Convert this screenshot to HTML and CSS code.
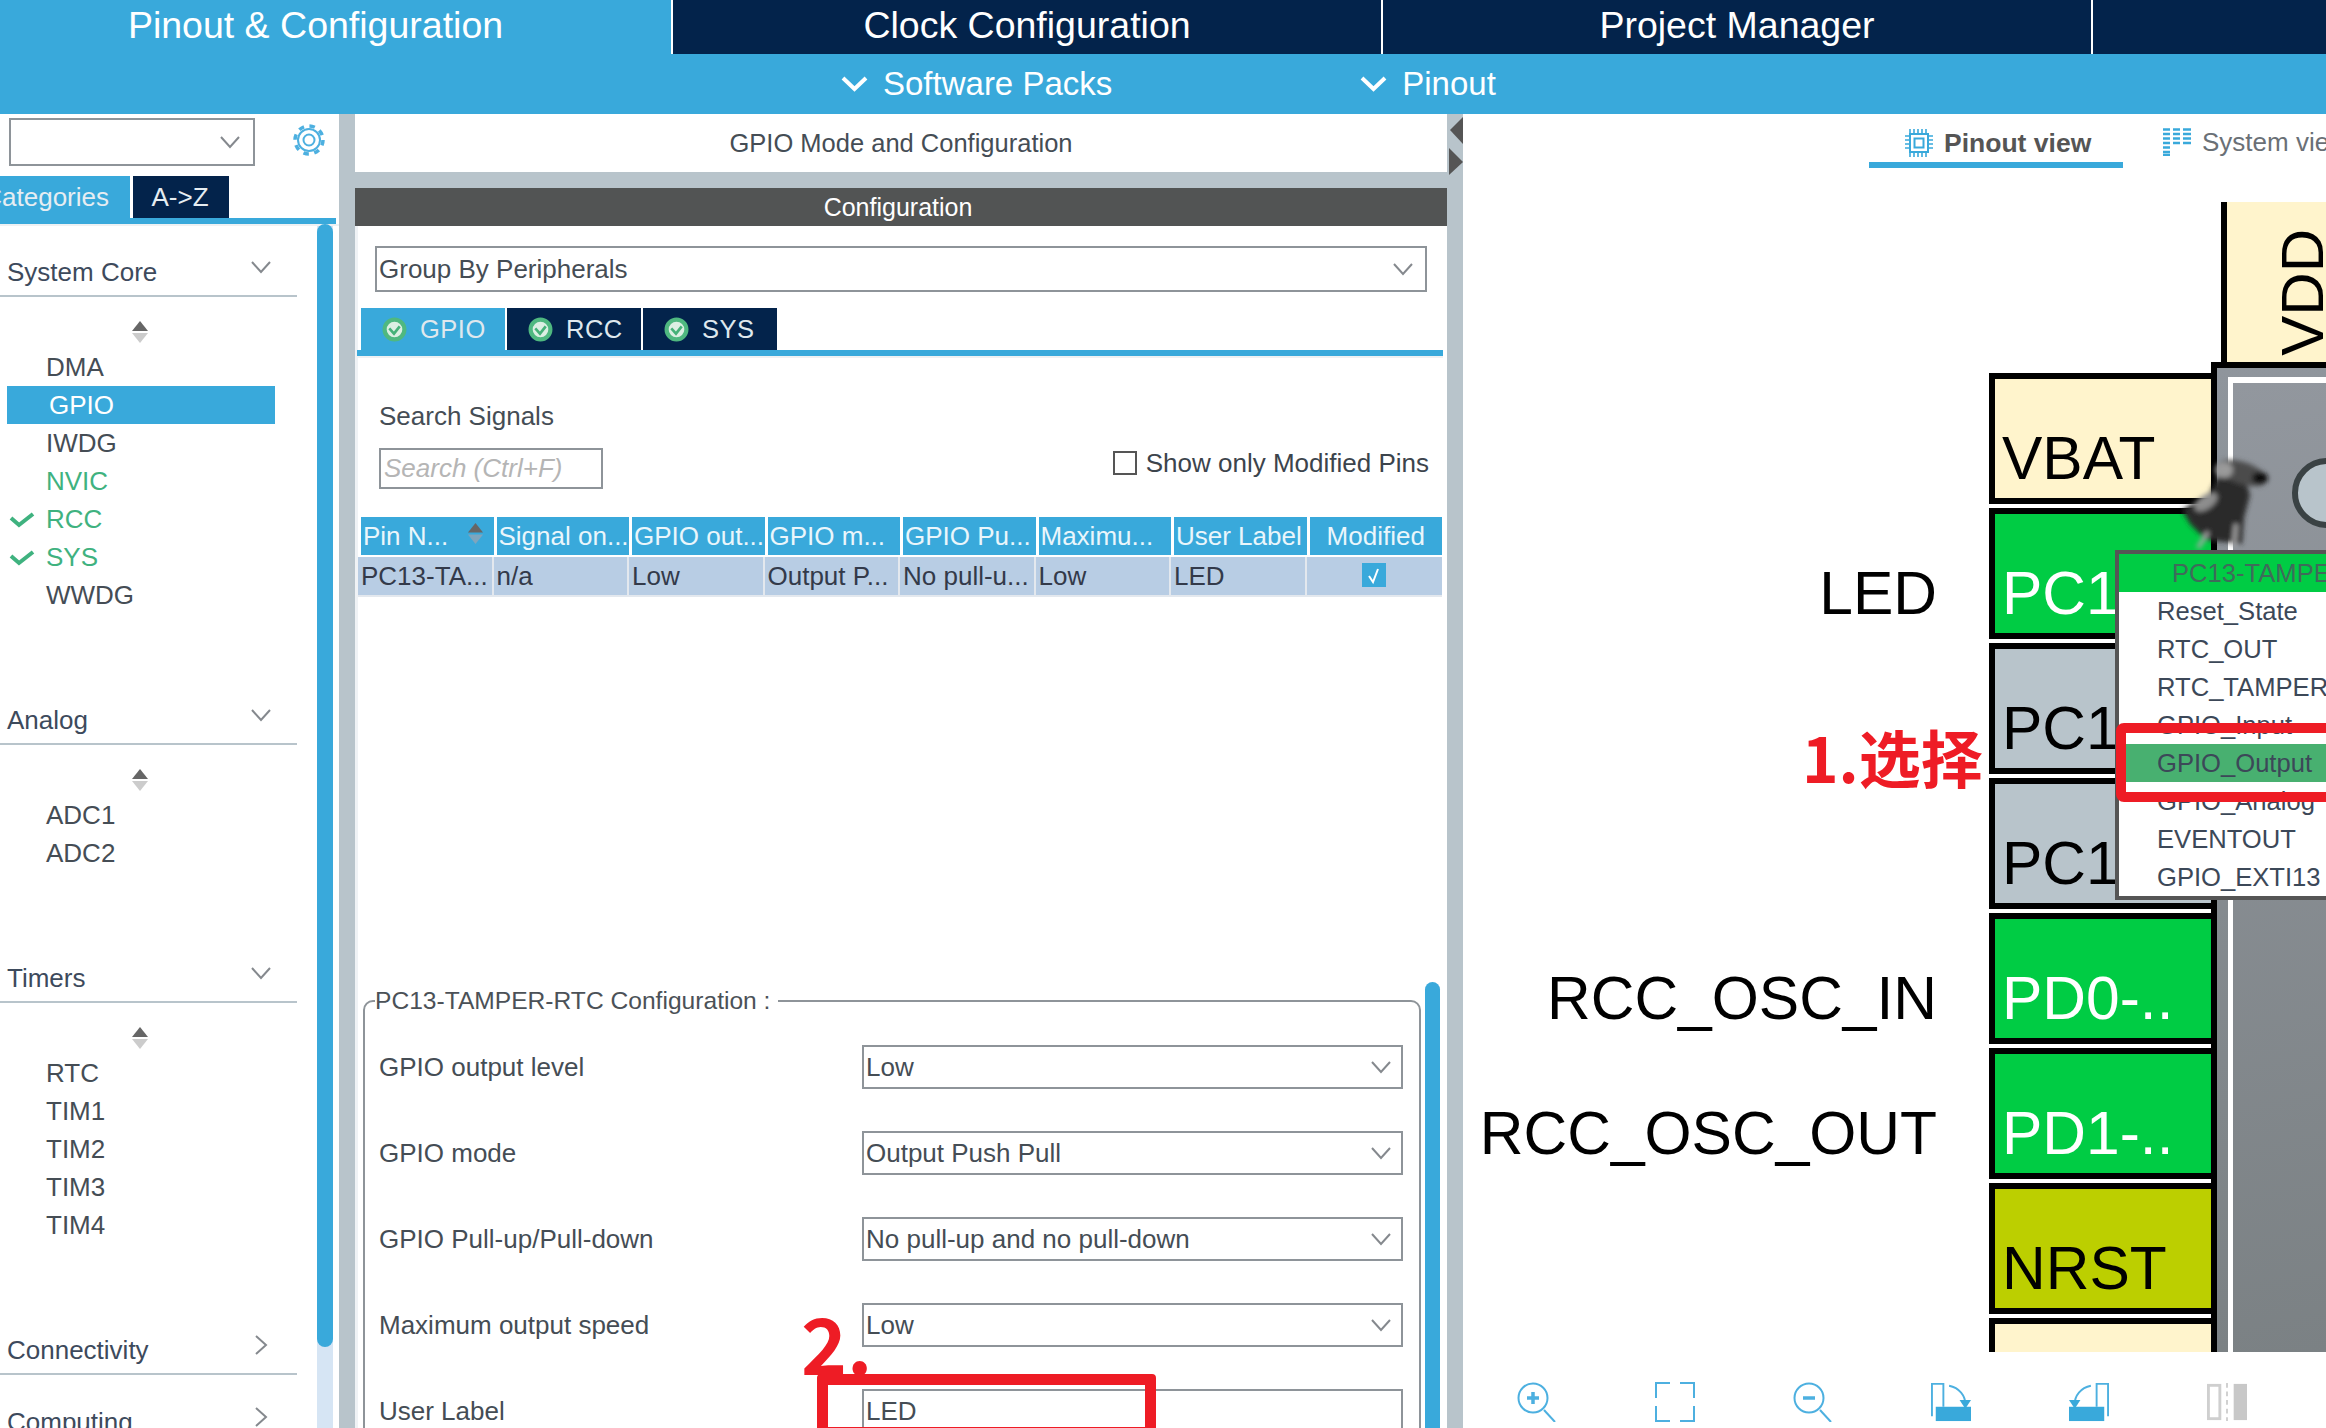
FILE: index.html
```html
<!DOCTYPE html>
<html lang="en">
<head>
  <meta charset="UTF-8" />
  <title>Pinout &amp; Configuration</title>
  <link rel="stylesheet" href="styles.css">
</head>
<body>
  <nav class="top-tabs">
    <div class="top-tab top-tab-active">Pinout &amp; Configuration</div>
    <div class="top-tab">Clock Configuration</div>
    <div class="top-tab">Project Manager</div>
    <div class="top-tab top-tab-rest"></div>
  </nav>
  <div class="sub-nav">
    <div class="sub-item">
      <svg class="sub-chevron" viewBox="0 0 29 18"><path d="M3 3 L14.5 14 L26 3" /></svg>
      <span>Software Packs</span>
    </div>
    <div class="sub-item">
      <svg class="sub-chevron" viewBox="0 0 29 18"><path d="M3 3 L14.5 14 L26 3" /></svg>
      <span>Pinout</span>
    </div>
  </div>

  <div class="workspace">
    <aside class="sidebar">
      <div class="side-search">
        <div class="side-select">
          <svg class="chevron" viewBox="0 0 22 14"><path d="M2 2 L11 12 L20 2" /></svg>
        </div>
        <svg class="gear" viewBox="0 0 32 32">
          <circle cx="16" cy="16" r="14" class="gear-teeth" />
          <circle cx="16" cy="16" r="11" class="gear-ring" />
          <circle cx="16" cy="16" r="5.5" class="gear-ring" />
        </svg>
      </div>
      <div class="side-tabs">
        <div class="side-tab side-tab-active"><span>Categories</span></div>
        <div class="side-tab">A-&gt;Z</div>
      </div>
      <div class="side-body">
        <div class="category-list">
          <section class="category">
            <div class="category-head">
              <span>System Core</span>
              <svg class="chevron" viewBox="0 0 22 14"><path d="M2 2 L11 12 L20 2" /></svg>
            </div>
            <svg class="sort-icon" viewBox="0 0 18 22"><path class="sort-up" d="M9 0 L17 10 H1 Z" /><path class="sort-down" d="M1 12 H17 L9 22 Z" /></svg>
            <div class="category-item">DMA</div>
            <div class="category-item category-item-selected">GPIO</div>
            <div class="category-item">IWDG</div>
            <div class="category-item category-item-green">NVIC</div>
            <div class="category-item category-item-green">
              <svg class="item-check" viewBox="0 0 26 18"><path d="M2 8 L10 15 L24 4" /></svg>RCC
            </div>
            <div class="category-item category-item-green">
              <svg class="item-check" viewBox="0 0 26 18"><path d="M2 8 L10 15 L24 4" /></svg>SYS
            </div>
            <div class="category-item">WWDG</div>
          </section>
          <section class="category">
            <div class="category-head">
              <span>Analog</span>
              <svg class="chevron" viewBox="0 0 22 14"><path d="M2 2 L11 12 L20 2" /></svg>
            </div>
            <svg class="sort-icon" viewBox="0 0 18 22"><path class="sort-up" d="M9 0 L17 10 H1 Z" /><path class="sort-down" d="M1 12 H17 L9 22 Z" /></svg>
            <div class="category-item">ADC1</div>
            <div class="category-item">ADC2</div>
          </section>
          <section class="category">
            <div class="category-head">
              <span>Timers</span>
              <svg class="chevron" viewBox="0 0 22 14"><path d="M2 2 L11 12 L20 2" /></svg>
            </div>
            <svg class="sort-icon" viewBox="0 0 18 22"><path class="sort-up" d="M9 0 L17 10 H1 Z" /><path class="sort-down" d="M1 12 H17 L9 22 Z" /></svg>
            <div class="category-item">RTC</div>
            <div class="category-item">TIM1</div>
            <div class="category-item">TIM2</div>
            <div class="category-item">TIM3</div>
            <div class="category-item">TIM4</div>
          </section>
          <section class="category category-closed">
            <div class="category-head">
              <span>Connectivity</span>
              <svg class="chevron-right" viewBox="0 0 14 22"><path d="M2 2 L12 11 L2 20" /></svg>
            </div>
          </section>
          <section class="category category-closed">
            <div class="category-head">
              <span>Computing</span>
              <svg class="chevron-right" viewBox="0 0 14 22"><path d="M2 2 L12 11 L2 20" /></svg>
            </div>
          </section>
        </div>
        <div class="side-track"><div class="side-thumb"></div></div>
      </div>
    </aside>

    <div class="divider"></div>

    <main class="config">
      <div class="config-title">GPIO Mode and Configuration</div>
      <div class="config-gap"></div>
      <div class="config-band">Configuration</div>

      <div class="config-body">
        <div class="group-select">
          <span>Group By Peripherals</span>
          <svg class="chevron" viewBox="0 0 22 14"><path d="M2 2 L11 12 L20 2" /></svg>
        </div>

        <div class="periph-tabs">
          <div class="periph-tab periph-tab-active">
            <svg class="ok-icon" viewBox="0 0 24 24"><circle cx="12" cy="12" r="9.5" /><path d="M7 11 L11.5 16 L17 9" /></svg>GPIO
          </div>
          <div class="periph-tab">
            <svg class="ok-icon" viewBox="0 0 24 24"><circle cx="12" cy="12" r="9.5" /><path d="M7 11 L11.5 16 L17 9" /></svg>RCC
          </div>
          <div class="periph-tab">
            <svg class="ok-icon" viewBox="0 0 24 24"><circle cx="12" cy="12" r="9.5" /><path d="M7 11 L11.5 16 L17 9" /></svg>SYS
          </div>
        </div>

        <div class="search-title">Search Signals</div>
        <div class="search-row">
          <div class="search-box">Search (Ctrl+F)</div>
          <label class="modified-check"><span class="check-box"></span>Show only Modified Pins</label>
        </div>

        <div class="signal-table">
          <div class="signal-head signal-head-sort">Pin N...
            <svg class="sort-icon-small" viewBox="0 0 18 22"><path class="sort-up" d="M9 0 L17 10 H1 Z" /><path class="sort-fade" d="M1 12 H17 L9 22 Z" /></svg>
          </div>
          <div class="signal-head">Signal on...</div>
          <div class="signal-head">GPIO out...</div>
          <div class="signal-head">GPIO m...</div>
          <div class="signal-head">GPIO Pu...</div>
          <div class="signal-head">Maximu...</div>
          <div class="signal-head">User Label</div>
          <div class="signal-head signal-center">Modified</div>

          <div class="signal-cell">PC13-TA...</div>
          <div class="signal-cell">n/a</div>
          <div class="signal-cell">Low</div>
          <div class="signal-cell">Output P...</div>
          <div class="signal-cell">No pull-u...</div>
          <div class="signal-cell">Low</div>
          <div class="signal-cell">LED</div>
          <div class="signal-cell signal-center">
            <svg class="table-check" viewBox="0 0 24 24"><rect width="24" height="24" /><path d="M7 13 L11 19 L16 6" /></svg>
          </div>
        </div>

        <fieldset class="pin-config">
          <legend>PC13-TAMPER-RTC Configuration :</legend>
          <div class="config-row">
            <span>GPIO output level</span>
            <div class="config-select">Low<svg class="chevron" viewBox="0 0 22 14"><path d="M2 2 L11 12 L20 2" /></svg></div>
          </div>
          <div class="config-row">
            <span>GPIO mode</span>
            <div class="config-select">Output Push Pull<svg class="chevron" viewBox="0 0 22 14"><path d="M2 2 L11 12 L20 2" /></svg></div>
          </div>
          <div class="config-row">
            <span>GPIO Pull-up/Pull-down</span>
            <div class="config-select">No pull-up and no pull-down<svg class="chevron" viewBox="0 0 22 14"><path d="M2 2 L11 12 L20 2" /></svg></div>
          </div>
          <div class="config-row">
            <span>Maximum output speed</span>
            <div class="config-select">Low<svg class="chevron" viewBox="0 0 22 14"><path d="M2 2 L11 12 L20 2" /></svg></div>
          </div>
          <div class="config-row">
            <span>User Label</span>
            <div class="config-select">LED</div>
          </div>
        </fieldset>
      </div>

      <div class="config-scroll"></div>
      <div class="note-two">2.</div>
      <div class="note-box-two"></div>
    </main>

    <div class="divider divider-arrows">
      <svg class="collapse-arrow" viewBox="0 0 14 27"><path d="M14 0 L1 13 L14 27 Z" /></svg>
      <svg class="collapse-arrow" viewBox="0 0 14 27"><path d="M0 0 L14 14 L0 27 Z" /></svg>
    </div>

    <section class="canvas">
      <div class="view-tabs">
        <div class="view-tab view-tab-active">
          <svg class="view-icon" viewBox="0 0 28 28">
            <rect x="5" y="5" width="18" height="18" class="chip-line" />
            <rect x="9.5" y="9.5" width="9" height="9" class="chip-line" />
            <path class="chip-legs" d="M5 0 V4 M9 0 V4 M13 0 V4 M17 0 V4 M21 0 V4 M5 24 V28 M9 24 V28 M13 24 V28 M17 24 V28 M21 24 V28 M0 7 H4 M0 11 H4 M0 15 H4 M0 19 H4 M24 7 H28 M24 11 H28 M24 15 H28 M24 19 H28" />
          </svg>
          Pinout view
        </div>
        <div class="view-tab">
          <svg class="view-icon" viewBox="0 0 28 28">
            <path class="sys-lines" d="M0 1.5 H7 M10 1.5 H17 M20 1.5 H28 M0 6 H7 M10 6 H17 M20 6 H28 M0 10.5 H7 M10 10.5 H17 M20 10.5 H28 M0 15 H7 M10 15 H17 M20 15 H28 M0 19.5 H7 M0 24 H7 M0 27 H7" />
          </svg>
          System view
        </div>
      </div>

      <div class="vdd-pin"><span>VDD</span></div>

      <div class="chip">
        <div class="chip-frame">
          <div class="chip-dot"></div>
        </div>
      </div>

      <div class="pin-column">
        <div class="pin-row"><div class="pin pin-power">VBAT</div></div>
        <div class="pin-row"><div class="pin-label">LED</div><div class="pin pin-used">PC13-..</div></div>
        <div class="pin-row"><div class="pin pin-free">PC14-..</div></div>
        <div class="pin-row"><div class="pin pin-free">PC15-..</div></div>
        <div class="pin-row"><div class="pin-label">RCC_OSC_IN</div><div class="pin pin-used">PD0-..</div></div>
        <div class="pin-row"><div class="pin-label">RCC_OSC_OUT</div><div class="pin pin-used">PD1-..</div></div>
        <div class="pin-row"><div class="pin pin-reset">NRST</div></div>
        <div class="pin-row"><div class="pin pin-power"></div></div>
      </div>

      <svg class="pushpin" viewBox="0 0 110 115">
        <defs><filter id="pinBlur"><feGaussianBlur stdDeviation="2.6" /></filter></defs>
        <g filter="url(#pinBlur)">
          <path fill="#2b2b2b" d="M12 70 L40 52 L52 28 L72 30 L80 55 L74 78 L72 104 L36 100 L20 84 Z" />
          <ellipse cx="72" cy="33" rx="26" ry="11" transform="rotate(18 72 33)" fill="#4b4b4b" />
          <ellipse cx="90" cy="38" rx="8" ry="6" fill="#0c0c0c" />
          <ellipse cx="54" cy="30" rx="9" ry="8" fill="#9a9a9a" />
          <ellipse cx="36" cy="62" rx="13" ry="7" transform="rotate(-35 36 62)" fill="#8d8d8d" />
          <path stroke="#a8a8a8" stroke-width="4" fill="none" d="M38 92 L28 108 M66 84 L64 106" />
        </g>
      </svg>

      <div class="pin-menu">
        <div class="pin-menu-title">PC13-TAMPER-RTC</div>
        <div class="pin-menu-item">Reset_State</div>
        <div class="pin-menu-item">RTC_OUT</div>
        <div class="pin-menu-item">RTC_TAMPER</div>
        <div class="pin-menu-item">GPIO_Input</div>
        <div class="pin-menu-item pin-menu-item-selected">GPIO_Output</div>
        <div class="pin-menu-item">GPIO_Analog</div>
        <div class="pin-menu-item">EVENTOUT</div>
        <div class="pin-menu-item">GPIO_EXTI13</div>
      </div>

      <div class="note-box-one"></div>
      <div class="note-one">1.选择</div>

      <div class="canvas-tools">
        <svg class="tool" viewBox="0 0 40 40">
          <circle cx="16" cy="16" r="14.5" /><path d="M27 28 L38 40" /><path class="tool-bold" d="M10 16 H22 M16 10 V22" />
        </svg>
        <svg class="tool" viewBox="0 0 40 40">
          <path d="M1 16 V1 H15 M25 1 H39 V16 M39 24 V39 H25 M15 39 H1 V24" />
        </svg>
        <svg class="tool" viewBox="0 0 40 40">
          <circle cx="16" cy="16" r="14.5" /><path d="M27 28 L38 40" /><path class="tool-bold" d="M10 16 H22" />
        </svg>
        <svg class="tool" viewBox="0 0 42 40">
          <path d="M1 35 V1 H13 V25" /><path d="M19 3 C30 5 36 14 36 22" /><rect class="tool-fill" x="5" y="25" width="37" height="15" /><path class="tool-fill" d="M30 18 H42 L36 27 Z" />
        </svg>
        <svg class="tool" viewBox="0 0 42 40">
          <path d="M41 35 V1 H29 V25" /><path d="M23 3 C12 5 6 14 6 22" /><rect class="tool-fill" x="0" y="25" width="37" height="15" /><path class="tool-fill" d="M0 18 H12 L6 27 Z" />
        </svg>
        <svg class="tool tool-off" viewBox="0 0 42 40">
          <rect x="1.5" y="2.5" width="12" height="35" /><path class="tool-dash" d="M21 0 V40" /><rect class="tool-fill" x="28" y="1" width="14" height="38" />
        </svg>
      </div>
    </section>
  </div>
</body>
</html>
```

FILE: styles.css
```css
* {
  box-sizing: border-box;
}
html, body {
  margin: 0;
  height: 1428px;
  overflow: hidden;
}
body {
  font-family: "Liberation Sans", Arial, sans-serif;
  font-size: 26px;
  color: #454d55;
  background-color: #fff;
}
svg {
  display: block;
  flex: none;
}

/* top bars */
.top-tabs {
  display: flex;
  height: 54px;
  background-color: #fff;
  gap: 2px;
}
.top-tab {
  width: 708px;
  background-color: #03234b;
  color: #fff;
  font-size: 37.5px;
  line-height: 51px;
  text-align: center;
}
.top-tab-active {
  width: 671px;
  background-color: #39a9db;
  padding-right: 40px;
}
.top-tab-rest {
  flex: 1;
}
.sub-nav {
  display: flex;
  height: 60px;
  padding-left: 840px;
  gap: 247px;
  background-color: #39a9db;
  color: #fff;
  font-size: 33px;
}
.sub-item {
  display: flex;
  align-items: center;
  gap: 14px;
}
.sub-chevron {
  width: 29px;
  height: 18px;
  fill: none;
  stroke: #fff;
  stroke-width: 4;
}

.workspace {
  display: flex;
  height: 1314px;
}
.divider {
  flex: none;
  width: 16px;
  background-color: #b8c4cb;
}
.divider-arrows {
  padding: 3px 0 0 2px;
  display: flex;
  flex-direction: column;
  gap: 4px;
}
.collapse-arrow {
  width: 14px;
  height: 27px;
  fill: #555;
}
.chevron {
  width: 22px;
  height: 14px;
  fill: none;
  stroke: #85898e;
  stroke-width: 2;
}
.chevron-right {
  width: 14px;
  height: 22px;
  fill: none;
  stroke: #85898e;
  stroke-width: 2;
}

/* left list */
.sidebar {
  flex: none;
  width: 339px;
  display: flex;
  flex-direction: column;
}
.side-search {
  display: flex;
  padding: 4px 0 0 9px;
  height: 62px;
}
.side-select {
  width: 246px;
  height: 48px;
  border: 2px solid #8e9499;
  display: flex;
  align-items: center;
  justify-content: flex-end;
  padding-right: 12px;
}
.gear {
  width: 32px;
  height: 32px;
  margin: 6px 0 0 38px;
  fill: none;
  stroke: #4db0e0;
}
.gear-teeth {
  stroke-width: 3.5;
  stroke-dasharray: 5.5 5.5;
}
.gear-ring {
  stroke-width: 2;
}
.side-tabs {
  display: flex;
  gap: 3px;
  height: 48px;
  flex: none;
  width: 336px;
  border-bottom: 6px solid #39a9db;
}
.side-tab {
  width: 96px;
  background-color: #03234b;
  color: #e6edf2;
  font-size: 26px;
  line-height: 42px;
  text-align: center;
  padding-right: 2px;
}
.side-tab-active {
  display: flex;
  justify-content: flex-end;
  width: 130px;
  overflow: hidden;
  white-space: nowrap;
  background-color: #39a9db;
  padding-right: 21px;
}
.side-tab-active span {
  flex: none;
}
.side-body {
  flex: 1;
  display: flex;
  min-height: 0;
  border-top: 2px solid #eef1f3;
}
.category-list {
  width: 317px;
  overflow: hidden;
  padding-top: 23px;
}
.side-track {
  width: 16px;
  background-color: #d6e5f4;
}
.side-thumb {
  height: 1123px;
  margin-top: -2px;
  background-color: #39a9db;
  border-radius: 8px;
}
.category {
  width: 297px;
  padding-bottom: 83px;
}
.category-closed {
  padding-bottom: 24px;
}
.category-head {
  display: flex;
  align-items: center;
  justify-content: space-between;
  height: 48px;
  padding: 0 25px 0 7px;
  border-bottom: 2px solid #b8c4cb;
  color: #3d4a5c;
}
.category-head svg {
  margin-top: -10px;
}
.category-closed .category-head {
  padding-right: 29px;
}
.sort-icon {
  width: 18px;
  height: 22px;
  margin: 24px 0 5px 131px;
}
.sort-up {
  fill: #666;
}
.sort-down {
  fill: #ccc;
}
.sort-fade {
  fill: #7fa5bd;
}
.category-item {
  position: relative;
  height: 38px;
  line-height: 38px;
  padding-left: 46px;
}
.category-item-selected {
  width: 268px;
  margin-left: 7px;
  padding-left: 42px;
  background-color: #39a9db;
  color: #fff;
}
.category-item-green {
  color: #3fb27f;
}
.item-check {
  position: absolute;
  left: 9px;
  top: 10px;
  width: 26px;
  height: 18px;
  fill: none;
  stroke: #3fb27f;
  stroke-width: 4;
}

/* middle panel */
.config {
  position: relative;
  flex: none;
  width: 1092px;
  overflow: hidden;
}
.config-title {
  height: 58px;
  line-height: 58px;
  text-align: center;
  font-size: 25.5px;
  background-color: #fff;
}
.config-gap {
  height: 16px;
  background-color: #b8c4cb;
}
.config-band {
  height: 38px;
  line-height: 38px;
  background-color: #525454;
  color: #fff;
  font-size: 25px;
  text-align: center;
  padding-right: 6px;
}
.config-body {
  display: flex;
  flex-direction: column;
  height: 1202px;
  border-left: 3px solid #eff2f5;
}
.config-body > * {
  flex: none;
}
.group-select {
  display: flex;
  align-items: center;
  justify-content: space-between;
  height: 46px;
  width: 1052px;
  margin: 20px 0 0 17px;
  padding: 0 11px 0 2px;
  border: 2px solid #8e9499;
}
.periph-tabs {
  display: flex;
  gap: 2px;
  height: 48px;
  width: 1086px;
  margin: 16px 0 0 -1px;
  padding-left: 4px;
  border-bottom: 6px solid #39a9db;
  box-shadow: 0 2px 0 #eef1f3;
}
.periph-tab {
  display: flex;
  align-items: center;
  gap: 13px;
  width: 134px;
  padding-left: 21px;
  background-color: #03234b;
  color: #dfe8ee;
  font-size: 25.5px;
  letter-spacing: 0.5px;
}
.periph-tab-active {
  width: 144px;
  background-color: #39a9db;
}
.ok-icon {
  width: 25px;
  height: 25px;
}
.ok-icon circle {
  fill: #dcefe3;
  stroke: #4fb880;
  stroke-width: 4;
}
.ok-icon path {
  fill: none;
  stroke: #45b178;
  stroke-width: 2.5;
}
.search-title {
  margin: 45px 0 0 21px;
  height: 30px;
  line-height: 30px;
}
.search-row {
  display: flex;
  justify-content: space-between;
  margin: 17px 18px 0 21px;
  height: 41px;
}
.search-box {
  width: 224px;
  border: 2px solid #8e9499;
  padding-left: 3px;
  font-style: italic;
  color: #b5b5b5;
  font-size: 26px;
  line-height: 36px;
}
.modified-check {
  display: flex;
  align-items: center;
  gap: 9px;
  height: 30px;
  color: #3c444c;
}
.check-box {
  width: 24px;
  height: 24px;
  border: 2px solid #555;
}
.signal-table {
  display: grid;
  grid-template-columns: repeat(8, 135.5px);
  grid-template-rows: 38px 40px;
  row-gap: 2px;
  margin: 28px 0 0 0;
  width: 1084px;
  font-size: 26px;
  line-height: 38px;
  white-space: nowrap;
}
.signal-head {
  position: relative;
  margin-left: 3px;
  padding-left: 2px;
  background-color: #39a9db;
  color: #eaf6fb;
  overflow: hidden;
}
.signal-cell {
  height: 40px;
  padding-left: 3px;
  background-color: #b8cde4;
  border-right: 2px solid #e3e8ee;
  border-bottom: 2px solid #e3e8ee;
  color: #333a4a;
  overflow: hidden;
}
.signal-center {
  display: block;
  text-align: center;
  padding: 0;
}
.signal-cell.signal-center {
  padding: 6px 0 0 0;
  border-right: 0;
}
.sort-icon-small {
  position: absolute;
  right: 10px;
  top: 6px;
  width: 17px;
  height: 21px;
}
.table-check {
  width: 24px;
  height: 24px;
  margin: 0 auto;
}
.table-check rect {
  fill: #39a9db;
}
.table-check path {
  fill: none;
  stroke: #fff;
  stroke-width: 2;
}
.pin-config {
  margin: 389px 0 0 5px;
  padding: 29px 16px 0 14px;
  width: 1058px;
  min-width: 0;
  height: 600px;
  border: 2px solid #8e9499;
  border-radius: 10px;
}
.pin-config legend {
  padding: 0 8px 0 0;
  margin-left: -4px;
  font-size: 24.6px;
  line-height: 30px;
  color: #4b5157;
}
.config-row {
  display: flex;
  align-items: center;
  justify-content: space-between;
  height: 44px;
  margin-bottom: 42px;
}
.config-select {
  display: flex;
  align-items: center;
  justify-content: space-between;
  width: 541px;
  height: 44px;
  padding: 0 9px 0 2px;
  border: 2px solid #8e9499;
  color: #454d55;
}
.config-scroll {
  position: absolute;
  left: 1070px;
  top: 868px;
  width: 15px;
  height: 460px;
  background-color: #39a9db;
  border-radius: 8px 8px 0 0;
}
.note-two {
  position: absolute;
  left: 446px;
  top: 1188px;
  font-family: "Noto Sans CJK SC", sans-serif;
  font-weight: 700;
  font-size: 78px;
  line-height: 78px;
  color: #ee1c25;
}
.note-box-two {
  position: absolute;
  left: 462px;
  top: 1260px;
  width: 339px;
  height: 64px;
  border: 11px solid #ee1c25;
  border-radius: 4px;
}

/* right panel */
.canvas {
  position: relative;
  flex: 1;
  overflow: hidden;
  background-color: #fff;
}
.view-tabs {
  display: flex;
  height: 54px;
  padding-left: 406px;
  white-space: nowrap;
}
.view-tab {
  flex: none;
  display: flex;
  align-items: center;
  gap: 11px;
  padding: 2px 0 0 40px;
  color: #6a7076;
}
.view-tab-active {
  width: 254px;
  padding: 10px 0 0 36px;
  border-bottom: 6px solid #39a9db;
  font-weight: 700;
  font-size: 26.5px;
  color: #555;
}
.view-icon {
  width: 28px;
  height: 28px;
  fill: none;
  stroke: #39a9db;
}
.chip-line {
  stroke-width: 2;
}
.chip-legs {
  stroke-width: 1.6;
}
.sys-lines {
  stroke-width: 2.4;
}
.vdd-pin {
  position: absolute;
  left: 758px;
  top: 88px;
  right: 0;
  height: 160px;
  border-left: 6px solid #000;
  background-color: #fff4cc;
  color: #000;
}
.vdd-pin span {
  position: absolute;
  left: 46px;
  bottom: 6px;
  writing-mode: vertical-rl;
  transform: rotate(180deg);
  font-size: 60px;
  line-height: 60px;
}
.chip {
  position: absolute;
  left: 748px;
  top: 248px;
  right: 0;
  height: 990px;
  padding: 9px 0 0 11px;
  border-top: 6px solid #000;
  border-left: 6px solid #000;
  background: linear-gradient(#8f959c, #7b8184);
}
.chip-frame {
  position: relative;
  height: 100%;
  border-top: 6px solid #fff;
  border-left: 5px solid #fff;
  background: linear-gradient(170deg, #92979e, #7b8184);
}
.chip-dot {
  position: absolute;
  left: 59px;
  top: 75px;
  width: 70px;
  height: 70px;
  border: 6px solid #3a4244;
  border-radius: 50%;
  background-color: #b8c4cb;
}
.pin-column {
  position: absolute;
  left: 0;
  top: 259px;
  width: 754px;
  height: 979px;
  overflow: hidden;
  color: #000;
}
.pin-row {
  display: flex;
  justify-content: flex-end;
  align-items: flex-end;
  gap: 52px;
  height: 131px;
  margin-bottom: 4px;
  font-size: 60.5px;
  line-height: 60px;
  white-space: nowrap;
}
.pin-label {
  padding-bottom: 16px;
}
.pin {
  width: 228px;
  height: 131px;
  flex: none;
  display: flex;
  align-items: flex-end;
  padding: 0 0 10px 7px;
  border: 6px solid #000;
  overflow: hidden;
}
.pin-power {
  background-color: #fff4cc;
}
.pin-used {
  background-color: #00cc44;
  color: #fff;
}
.pin-free {
  background-color: #b8c4cb;
}
.pin-reset {
  background-color: #bccf00;
}
.pushpin {
  position: absolute;
  left: 707px;
  top: 326px;
  width: 110px;
  height: 115px;
}
.pin-menu {
  position: absolute;
  left: 652px;
  top: 436px;
  width: 300px;
  border: 4px solid #555;
  background-color: #fff;
  font-size: 25.6px;
  white-space: nowrap;
  color: #3c4858;
}
.pin-menu-title {
  height: 38px;
  line-height: 38px;
  padding-left: 53px;
  background-color: #00cc44;
  color: #3f6b5a;
}
.pin-menu-item {
  height: 38px;
  line-height: 38px;
  padding-left: 38px;
}
.pin-menu-item-selected {
  background-color: #48b070;
}
.note-box-one {
  position: absolute;
  left: 653px;
  top: 609px;
  width: 260px;
  height: 79px;
  border: 10px solid #ee1c25;
  border-radius: 8px;
}
.note-one {
  position: absolute;
  left: 339px;
  top: 602px;
  font-family: "Noto Sans CJK SC", sans-serif;
  font-weight: 700;
  font-size: 62px;
  line-height: 80px;
  color: #ee1c25;
}
.canvas-tools {
  position: absolute;
  left: 54px;
  top: 1268px;
  display: flex;
  gap: 98px;
}
.tool {
  width: 40px;
  height: 40px;
  fill: none;
  stroke: #4db0e0;
  stroke-width: 2;
}
.tool-bold {
  stroke-width: 3.5;
}
.tool-fill {
  fill: #39a9db;
  stroke: none;
}
.tool-off {
  stroke: #cfcfcf;
  stroke-width: 3;
}
.tool-off .tool-fill {
  fill: #c8c8c8;
}
.tool-dash {
  stroke-width: 2;
  stroke-dasharray: 5 4;
}
```
